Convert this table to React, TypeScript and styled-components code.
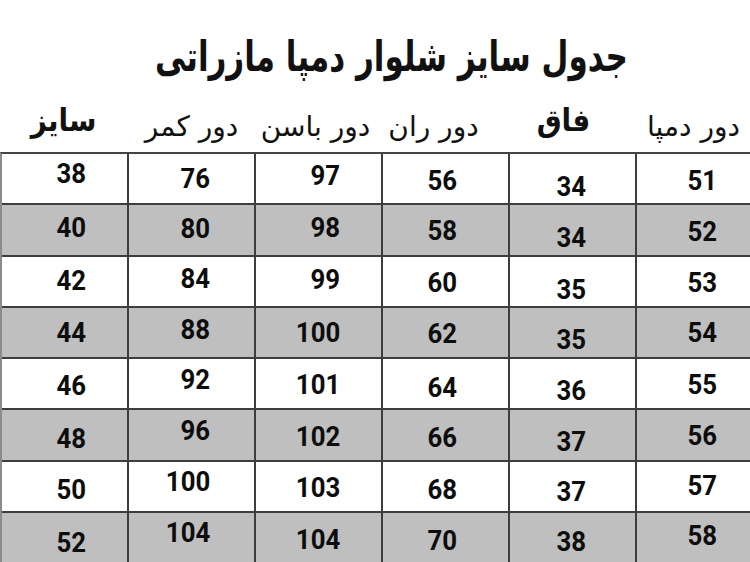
import React from 'react';
import styled, { createGlobalStyle } from 'styled-components';

const GlobalStyle = createGlobalStyle`
  html, body {
    margin: 0;
    padding: 0;
    background: #fff;
  }
  body {
    overflow: hidden;
  }
`;

const Page = styled.div`
  width: 750px;
  height: 562px;
  overflow: hidden;
  background: #fff;
  color: #111;
  font-family: "DejaVu Sans", sans-serif;
`;

const TitleBar = styled.div`
  height: 100px;
  box-sizing: border-box;
  padding: 32px 0 0 32px;
  display: flex;
  justify-content: center;
`;

const Title = styled.h1`
  margin: 0;
  font-family: "DejaVu Sans Condensed", "DejaVu Sans", sans-serif;
  font-size: 42px;
  font-weight: 700;
  line-height: 1.2;
  white-space: nowrap;
  transform: scaleX(0.82);
`;

const Grid = styled.div`
  display: grid;
  grid-template-columns: repeat(6, 127px);
  width: 764px;
`;

const HeaderRow = styled(Grid)`
  height: 52px;
`;

const HeadCell = styled.div<{ $big?: boolean; $dx: number }>`
  display: flex;
  align-items: flex-end;
  justify-content: center;
  padding-bottom: ${(p) => (p.$big ? 14 : 9)}px;
  font-family: ${(p) =>
    p.$big ? '"DejaVu Sans Condensed", "DejaVu Sans", sans-serif' : '"DejaVu Sans", sans-serif'};
  font-size: ${(p) => (p.$big ? 31 : 28)}px;
  font-weight: ${(p) => (p.$big ? 700 : 400)};
  transform: translateX(${(p) => p.$dx}px);
  white-space: nowrap;
`;

const Table = styled(Grid)`
  grid-auto-rows: 51.3px;
  border-top: 2px solid #444;
  border-left: 2px solid #8c8c8c;
`;

const Cell = styled.div<{ $shade: boolean; $pad: number }>`
  box-sizing: border-box;
  display: flex;
  align-items: center;
  justify-content: flex-end;
  padding-right: ${(p) => p.$pad}px;
  background: ${(p) => (p.$shade ? '#bfbfbf' : '#fff')};
  border-right: 2px solid #3d3d3d;
  border-bottom: 2px solid #3d3d3d;
  font-family: Roboto, "Liberation Sans", sans-serif;
  font-weight: 700;
  font-size: 28px;
  color: #0d0d0d;
`;

const Num = styled.span<{ $dy: number }>`
  display: inline-block;
  transform: translateY(${(p) => p.$dy}px) scaleX(0.92);
  transform-origin: right center;
`;

const columns = [
  { label: 'سایز', big: true, dx: 0, pad: 41 },
  { label: 'دور کمر', big: false, dx: 1, pad: 44 },
  { label: 'دور باسن', big: false, dx: -2, pad: 41 },
  { label: 'دور ران', big: false, dx: -11, pad: 51 },
  { label: 'فاق', big: true, dx: -8, pad: 49 },
  { label: 'دور دمپا', big: false, dx: -5, pad: 45 },
];

// [value, vertical nudge] per cell
const rows: [string, number][][] = [
  [['38', -5], ['76', 0], ['97', -3], ['56', 2], ['34', 8], ['51', 2]],
  [['40', -2], ['80', -1], ['98', -2], ['58', 1], ['34', 8], ['52', 2]],
  [['42', -1], ['84', -3], ['99', -2], ['60', 1], ['35', 8], ['53', 1]],
  [['44', 0], ['88', -3], ['100', 0], ['62', 1], ['35', 7], ['54', 0]],
  [['46', 2], ['92', -4], ['101', 1], ['64', 4], ['36', 7], ['55', 1]],
  [['48', 3], ['96', -5], ['102', 1], ['66', 2], ['37', 6], ['56', 0]],
  [['50', 3], ['100', -5], ['103', 1], ['68', 3], ['37', 5], ['57', -1]],
  [['52', 5], ['104', -5], ['104', 2], ['70', 3], ['38', 4], ['58', -2]],
];

const App: React.FC = () => {
  return (
    <Page>
      <GlobalStyle />
      <TitleBar>
        <Title dir="rtl">جدول سایز شلوار دمپا مازراتی</Title>
      </TitleBar>

      <HeaderRow>
        {columns.map((c) => (
          <HeadCell key={c.label} $big={c.big} $dx={c.dx} dir="rtl">
            {c.label}
          </HeadCell>
        ))}
      </HeaderRow>

      <Table>
        {rows.map((row, r) =>
          row.map(([value, dy], c) => (
            <Cell key={`${r}-${c}`} $shade={r % 2 === 1} $pad={columns[c].pad}>
              <Num $dy={dy}>{value}</Num>
            </Cell>
          ))
        )}
      </Table>
    </Page>
  );
};

export default App;
